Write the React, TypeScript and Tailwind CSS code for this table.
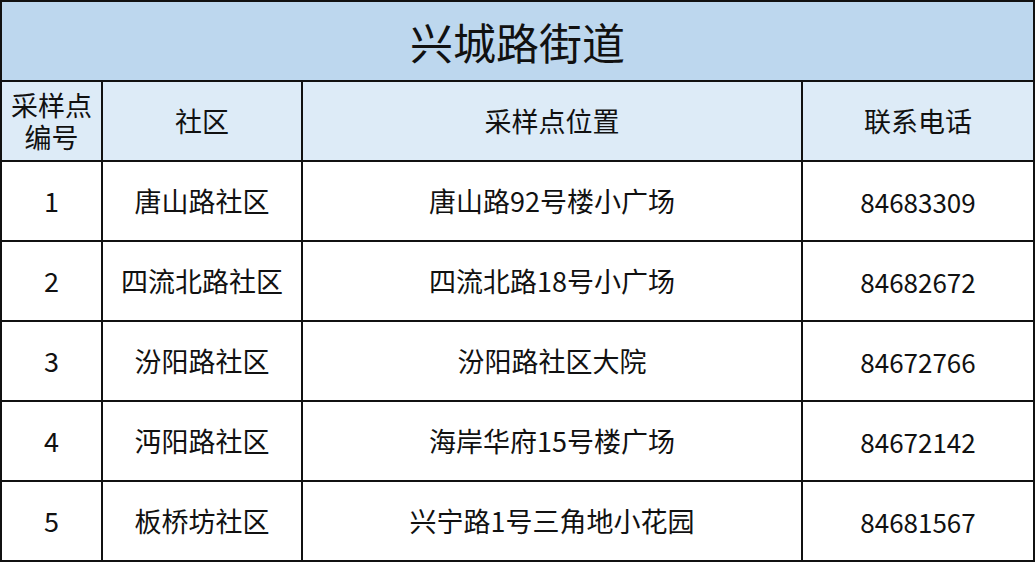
import React from 'react';

const rows = [
  { no: '1', community: '唐山路社区', place: '唐山路92号楼小广场', phone: '84683309' },
  { no: '2', community: '四流北路社区', place: '四流北路18号小广场', phone: '84682672' },
  { no: '3', community: '汾阳路社区', place: '汾阳路社区大院', phone: '84672766' },
  { no: '4', community: '沔阳路社区', place: '海岸华府15号楼广场', phone: '84672142' },
  { no: '5', community: '板桥坊社区', place: '兴宁路1号三角地小花园', phone: '84681567' },
];

const cell = 'border-2 border-[#111] text-center align-middle';

const App: React.FC = () => {
  return (
    <div className="w-[1035px] h-[562px] bg-white overflow-hidden" style={{ fontFamily: '"Noto Sans CJK SC", "Noto Sans", sans-serif' }}>
      <table className="w-[1035px] table-fixed border-collapse text-[#111]">
        <colgroup>
          <col className="w-[101px]" />
          <col className="w-[200px]" />
          <col className="w-[500px]" />
          <col />
        </colgroup>
        <tbody>
          <tr className="h-[80px] bg-[#bdd7ee]">
            <td colSpan={4} className={`${cell} text-[43px] font-normal`}>兴城路街道</td>
          </tr>
          <tr className="h-[80px] bg-[#ddebf7] text-[27px]">
            <td className={cell}>
              <div className="leading-[32px]">采样点</div>
              <div className="leading-[32px]">编号</div>
            </td>
            <td className={cell}>社区</td>
            <td className={cell}>采样点位置</td>
            <td className={cell}>联系电话</td>
          </tr>
          {rows.map(r => (
            <tr key={r.no} className="h-[80px] text-[27px]">
              <td className={cell}>{r.no}</td>
              <td className={cell}>{r.community}</td>
              <td className={cell}>{r.place}</td>
              <td className={`${cell} text-[26px]`}>{r.phone}</td>
            </tr>
          ))}
        </tbody>
      </table>
    </div>
  );
};

export default App;
